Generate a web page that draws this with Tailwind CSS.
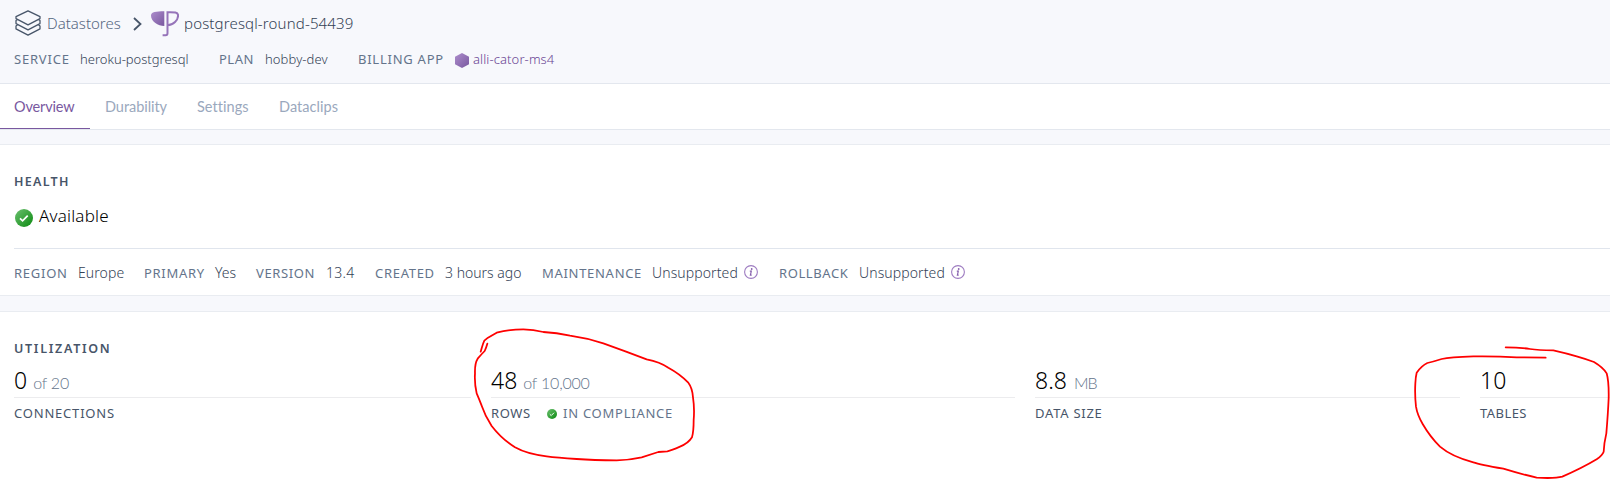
<!DOCTYPE html>
<html lang="en">
<head>
<meta charset="utf-8">
<title>postgresql-round-54439 | Datastores</title>
<script src="https://cdn.jsdelivr.net/npm/@tailwindcss/browser@4"></script>
</head>
<body class="relative h-[479px] w-[1610px] overflow-hidden bg-white font-['Lato','Noto_Sans',sans-serif] whitespace-nowrap text-[#475569]">

<svg class="absolute size-0" aria-hidden="true">
  <defs>
    <linearGradient id="violet" x1="0" y1="0" x2="1" y2="1"><stop offset="0" stop-color="#ad8dcc"/><stop offset="1" stop-color="#79589f"/></linearGradient>
    <linearGradient id="green" x1="0" y1="0" x2="1" y2="1"><stop offset="0" stop-color="#6cc070"/><stop offset="1" stop-color="#0b8a10"/></linearGradient>
    <symbol id="check" viewBox="0 0 18 18"><circle cx="9" cy="9" r="9" fill="url(#green)"/><path d="M5 9.3l2.6 2.5 5.1-5.1" fill="none" stroke="#fff" stroke-width="1.7"/></symbol>
    <symbol id="info" viewBox="0 0 14 14"><circle cx="7" cy="7" r="6.4" fill="none" stroke="#9e7cc1" stroke-width="1.1"/><circle cx="7.7" cy="4" r=".9" fill="#8660ad"/><path d="M5.8 6.1h1.5L6.4 10.2h1.3" fill="none" stroke="#8660ad" stroke-width="1.2"/></symbol>
  </defs>
</svg>

<header class="h-[84px] border-b border-[#e3e7ee] bg-[#f7f8fc] pt-[11px] pl-3.5">
  <div class="flex h-6 leading-6">
    <svg class="-mt-px ml-px h-[26px] w-[26px]" viewBox="0 0 26 26" fill="none" stroke="#475569" stroke-width="1.3" stroke-linejoin="round">
      <path d="M13 .8L25 6.600v2L13 14.800 1 8.600v-2z"/>
      <path d="M2.500 9.500L1 10.600v3L13 19.800l12-6.200v-3l-1.500-1.100M2.500 14.800L1 15.900v3l12 6.300 12-6.300v-3l-1.500-1.100"/>
    </svg>
    <span class="ml-[6px] w-[86px] font-['Noto_Sans'] text-[15px] font-light text-[#566781]">Datastores</span>
    <svg class="mt-1.5 h-[14px] w-[9px]" viewBox="0 0 9 14" fill="none" stroke="#475569" stroke-width="1.8"><path d="M1 1l6.5 6L1 13"/></svg>
    <svg class="ml-[9px] h-[26px] w-[28px]" viewBox="0 0 28 26">
      <path d="M0 4.500C0 1 5 .3 13.300 .3V15C7 15 0 10.500 0 4.500z" fill="url(#violet)"/>
      <path d="M16.500 14.200V1.200c7-.2 10.600 0 10.600 3.200 0 4.600-4.600 9.600-10.600 9.800M16.500 12v10.300q0 2-1.900 2h-3" fill="none" stroke="#9674b9" stroke-width="2"/>
    </svg>
    <span class="ml-[5px] font-['Noto_Sans'] text-[15px] font-light tracking-[0.15px] text-[#334155]">postgresql-round-54439</span>
  </div>
  <div class="mt-[13px] flex h-5 items-baseline leading-5">
    <span class="w-[66px] font-['Noto_Sans'] text-[13px] tracking-[0.8px] text-[#64748b]">SERVICE</span>
    <span class="w-[139px] font-['Noto_Sans'] text-[13px] font-light text-[#334155]">heroku-postgresql</span>
    <span class="w-[46px] font-['Noto_Sans'] text-[13px] tracking-[0.5px] text-[#64748b]">PLAN</span>
    <span class="w-[93px] font-['Noto_Sans'] text-[13px] font-light tracking-[0.1px] text-[#334155]">hobby-dev</span>
    <span class="mt-px flex items-baseline">
      <span class="w-[97px] font-['Noto_Sans'] text-[13px] tracking-[0.75px] text-[#64748b]">BILLING APP</span>
      <svg class="mt-1 h-[15px] w-[14px] self-start" viewBox="0 0 14 15"><path d="M7 0l7 3.700v7.500L7 15 0 11.200V3.700z" fill="url(#violet)"/></svg>
      <span class="ml-1 font-['Noto_Sans'] text-[13px] font-light tracking-[0.1px] text-[#6a4594]">alli-cator-ms4</span>
    </span>
  </div>
</header>

<nav class="flex h-[46px] border-b border-[#e3e7ee] text-[14.5px] leading-[45px] text-[#9aa8bd]">
  <a class="h-[45px] w-[90px] border-b border-[#79589f] pl-3.5 text-[#79589f] tracking-[-0.15px]">Overview</a>
  <a class="w-[92px] pl-[15px] tracking-[-0.05px]">Durability</a>
  <a class="w-[82px] pl-[15px] tracking-[0.05px]">Settings</a>
  <a class="pl-[15px] tracking-[0.05px]">Dataclips</a>
</nav>

<div class="h-[15px] border-b border-[#e9ecf1] bg-[#f7f8fc]"></div>

<section class="h-[151px] border-b border-[#e9ecf1] pt-[27px] pl-3.5">
  <h2 class="h-5 font-['Noto_Sans'] text-[12.5px] leading-5 font-semibold tracking-[1.3px]">HEALTH</h2>
  <div class="mt-[11px] flex h-6 text-black">
    <svg class="mt-1.5 ml-px size-[18px]"><use href="#check"/></svg>
    <span class="ml-1.5 font-['Noto_Sans'] text-[17px] leading-[26px] font-light tracking-[0.2px]">Available</span>
  </div>
  <div class="mt-[21px] flex h-[34px] items-baseline border-t border-[#e0e5ed] pt-[14px] text-[14px] leading-5 text-[#334155]">
    <span class="w-[64px] font-['Noto_Sans'] text-[13px] tracking-[0.75px] text-[#64748b]">REGION</span>
    <span class="w-[66px] font-['Noto_Sans'] font-light tracking-[0.1px]">Europe</span>
    <span class="w-[71px] font-['Noto_Sans'] text-[13px] tracking-[0.7px] text-[#64748b]">PRIMARY</span>
    <span class="w-[41px] font-['Noto_Sans'] font-light">Yes</span>
    <span class="w-[70px] font-['Noto_Sans'] text-[13px] tracking-[0.6px] text-[#64748b]">VERSION</span>
    <span class="w-[49px] font-['Noto_Sans'] font-light tracking-[0.3px]">13.4</span>
    <span class="w-[70px] font-['Noto_Sans'] text-[13px] tracking-[0.7px] text-[#64748b]">CREATED</span>
    <span class="w-[97px] font-['Noto_Sans'] font-light">3 hours ago</span>
    <span class="w-[110px] font-['Noto_Sans'] text-[13px] tracking-[0.7px] text-[#64748b]">MAINTENANCE</span>
    <span class="w-[92px] font-['Noto_Sans'] font-light tracking-[0.1px]">Unsupported</span>
    <svg class="mt-[2px] h-[14px] w-[14px] self-start"><use href="#info"/></svg>
    <span class="ml-[21px] w-[80px] font-['Noto_Sans'] text-[13px] tracking-[0.6px] text-[#64748b]">ROLLBACK</span>
    <span class="w-[92px] font-['Noto_Sans'] font-light tracking-[0.1px]">Unsupported</span>
    <svg class="mt-[2px] h-[14px] w-[14px] self-start"><use href="#info"/></svg>
  </div>
</section>

<div class="h-4 border-b border-[#e9ecf1] bg-[#f7f8fc]"></div>

<section class="pt-[27px] pl-3.5">
  <h2 class="h-5 font-['Noto_Sans'] text-[12.5px] leading-5 font-semibold tracking-[1.7px]">UTILIZATION</h2>
  <div class="mt-[7px] grid grid-cols-[457px_524px_425px_130px] gap-5">
    <div>
      <p class="flex h-8 items-baseline gap-1.5 border-b border-[#ececee] font-['Noto_Sans'] text-[23px] leading-7 font-light text-black">0 <span class="font-['Lato'] text-base tracking-[-0.2px] text-[#64748b]">of 20</span></p>
      <p class="mt-[5px] font-['Noto_Sans'] text-[13px] leading-5 tracking-[0.8px]">CONNECTIONS</p>
    </div>
    <div>
      <p class="flex h-8 items-baseline gap-1.5 border-b border-[#ececee] font-['Noto_Sans'] text-[23px] leading-7 font-light text-black">48 <span class="font-['Lato'] text-base tracking-[-0.2px] text-[#64748b]">of 10,000</span></p>
      <p class="mt-[5px] flex font-['Noto_Sans'] text-[13px] leading-5 tracking-[0.75px]"><span class="w-[56px] tracking-[0.6px]">ROWS</span><svg class="mt-[6px] mr-1.5 size-[10px]"><use href="#check"/></svg><span class="text-[#64748b]">IN COMPLIANCE</span></p>
    </div>
    <div>
      <p class="flex h-8 items-baseline gap-[7px] border-b border-[#ececee] font-['Noto_Sans'] text-[23px] leading-7 font-light text-black">8.8 <span class="font-['Lato'] text-base tracking-[-1px] text-[#64748b]">MB</span></p>
      <p class="mt-[5px] font-['Noto_Sans'] text-[13px] leading-5 tracking-[0.75px]">DATA SIZE</p>
    </div>
    <div>
      <p class="flex h-8 items-baseline border-b border-[#ececee] font-['Noto_Sans'] text-[23px] leading-7 font-light text-black">10</p>
      <p class="mt-[5px] font-['Noto_Sans'] text-[13px] leading-5 tracking-[0.45px]">TABLES</p>
    </div>
  </div>
</section>

<!-- Hand-drawn markup over the rows and tables figures -->
<svg class="pointer-events-none absolute inset-0 h-[479px] w-[1610px]" viewBox="0 0 1610 479" fill="none" stroke="#fe0000" stroke-width="5.300" stroke-linecap="round" stroke-linejoin="round">
  <g transform="translate(460 320) scale(.33333)">
    <path d="M62 95C66 82 68 72 73 62L84 53Q96 46 110 38Q150 28 190 28Q220 28 250 36Q290 38 330 47Q380 54 430 70Q500 95 560 118Q600 126 625 143Q660 162 684 187Q697 204 699 232Q704 265 701 300Q701 335 696 352Q685 370 660 380Q635 391 622 394L595 396Q570 404 545 412Q510 420 470 421Q400 421 350 417Q290 413 260 409Q200 402 165 382Q125 357 95 318Q75 287 65 257Q57 236 50 220Q43 190 45 160Q44 130 53 116Q65 102 74 93Q79 82 82 71"/>
  </g>
  <g transform="translate(1390 330) scale(.33333)">
    <path d="M347 52Q385 52 420 57Q445 61 490 61Q530 70 560 79Q585 86 612 96Q640 113 650 130Q657 155 656 205Q654 250 649 310Q642 340 641 365Q638 375 620 388Q575 415 517 440Q495 446 440 443Q385 430 340 416Q270 404 250 397Q185 380 150 350Q120 320 98 282Q82 255 78 230Q74 195 76 160Q77 140 80 128Q95 107 112 99Q130 95 155 87Q180 81 250 79Q320 78 380 82L467 83"/>
  </g>
</svg>
</body>
</html>
